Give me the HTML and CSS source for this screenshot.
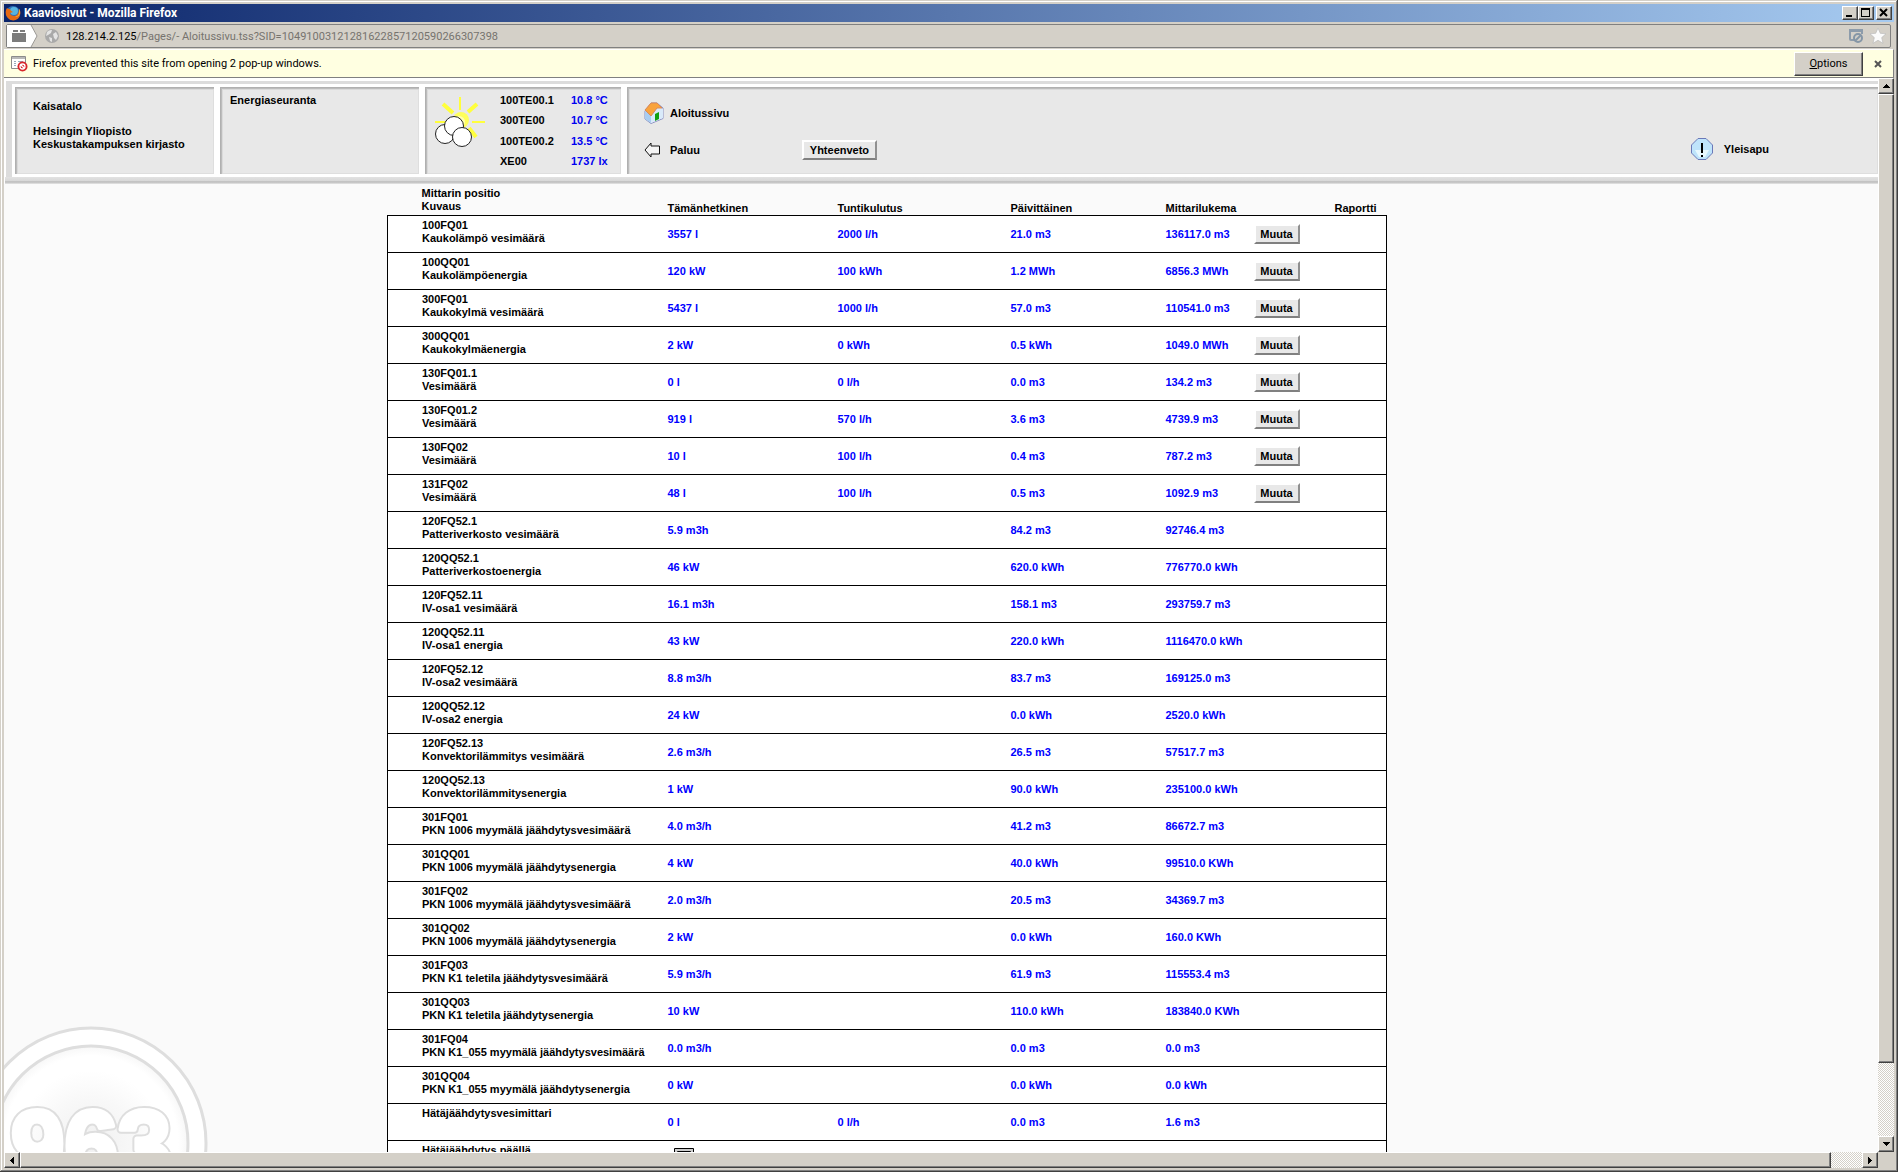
FILE: index.html
```html
<!DOCTYPE html>
<html lang="fi">
<head>
<meta charset="utf-8">
<title>Kaaviosivut - Mozilla Firefox</title>
<link rel="stylesheet" href="styles.css">
</head>
<body>
<div class="window">
  <div class="titlebar">
    <svg class="fx" width="16" height="16" viewBox="0 0 16 16"><circle cx="8" cy="8" r="7" fill="#2f6fb5"/><circle cx="9" cy="6" r="4" fill="#58b4e0"/><path d="M2 3C0 6 0 11 4 14c4 3 10 1 11-4 1-3 0-5-1-6 0 3-1 6-4 7-3 0-5-1-5-3l3-1C6 6 5 5 5 4 4 4 3 4 2 3z" fill="#e66a14"/><path d="M14 4c1 4 0 7-4 8 3 0 5-2 5-5 0-1 0-2-1-3z" fill="#ffcb3a"/></svg>
    <h1 class="title">Kaaviosivut - Mozilla Firefox</h1>
    <div class="winbtns">
      <button class="wb" aria-label="Minimize"><svg width="12" height="10"><path d="M2 7h6v2H2z"/></svg></button>
      <button class="wb" aria-label="Maximize"><svg width="12" height="10"><path d="M1 0h9v9H1zM2 2v6h7V2z" fill-rule="evenodd"/></svg></button>
      <button class="wb close" aria-label="Close"><svg width="12" height="10"><path d="M2 1l7 7M9 1L2 8" stroke="#000" stroke-width="2"/></svg></button>
    </div>
  </div>

  <div class="toolbar">
    <div class="urlbar">
      <svg class="identity" width="31" height="22" viewBox="0 0 31 22"><path d="M0 0h24l6 11-6 11H0z" fill="#fff"/><path d="M24 0l6 11-6 11" fill="none" stroke="#9a9894"/><path d="M6 5h5v2H6zM13 5h5v2h-5zM5 8h14v9H5z" fill="#7c7c7c"/></svg>
      <svg class="globe" width="16" height="16" viewBox="0 0 16 16"><circle cx="8" cy="8" r="7" fill="#a9a9a9"/><path d="M3 4c2-2 4-2 5-2L7 5 4 7 2 8zM9 6l3-2 2 4-2 4-2-2zM5 9l3 1v4l-2-1z" fill="#e4e4e4"/></svg>
      <div class="address"><b>128.214.2.125</b>/Pages/- Aloitussivu.tss?SID=10491003121281622857120590266307398</div>
      <svg width="16" height="16" viewBox="0 0 16 16"><path d="M14 3v3M2 2v9q0 1 1 1h3" fill="none" stroke="#8d9cab" stroke-width="2"/><path d="M1 1h14v3H1z" fill="#8d9cab"/><circle cx="10" cy="10" r="4" fill="#d4d0c8" stroke="#8596a6" stroke-width="2"/><path d="M7 13l6-6" stroke="#8596a6" stroke-width="2"/></svg>
      <svg class="star" width="16" height="16" viewBox="0 0 16 16"><path d="M8 0l2.300 5.300 5.700.5-4.300 3.800L13 15.300l-5-3-5 3 1.300-5.700L0 5.800l5.700-.5z" fill="#fbfbfb" stroke="#bbb" stroke-width=".7"/></svg>
    </div>
  </div>

  <div class="notice">
    <svg width="17" height="17" viewBox="0 0 17 17"><path d="M.5 1.500h14v12H.5z" fill="#fff" stroke="#8b8b8b"/><path d="M1 2h13v2H1z" fill="#b8b8b8"/><path d="M3 6h2v1H3zM3 8h2v1H3zM3 10h2v1H3zM7 6h5v1H7z" fill="#9ab"/><circle cx="11.500" cy="11.500" r="5" fill="#d8262b"/><circle cx="11.500" cy="11.500" r="2.500" fill="none" stroke="#fff" stroke-width="1.300"/><path d="M9.700 9.700l3.600 3.600" stroke="#fff" stroke-width="1.300"/></svg>
    <span class="msg">Firefox prevented this site from opening 2 pop-up windows.</span>
    <button class="options"><u>O</u>ptions</button>
    <button class="dismiss" aria-label="Close notification"><svg width="8" height="8"><path d="M1 1l6 6M7 1L1 7" stroke="#555" stroke-width="2"/></svg></button>
  </div>

  <div class="view">
    <div class="page">
      <svg class="mark" width="220" height="130" viewBox="0 0 220 130">
        <defs><radialGradient id="g"><stop offset="0" stop-color="#f0f0f0"/><stop offset=".45" stop-color="#f8f8f8"/><stop offset=".75" stop-color="#fff"/><stop offset=".9" stop-color="#fff"/><stop offset="1" stop-color="#f7f7f7"/></radialGradient></defs>
        <circle cx="87" cy="121" r="115" fill="#fff" stroke="#dedede" stroke-width="3"/>
        <circle cx="87" cy="121" r="97" fill="url(#g)" stroke="#dedede" stroke-width="3"/>
        <text class="num outline" x="7" y="156">963</text>
        <text class="num" x="7" y="156">963</text>
      </svg>

      <header class="head">
        <div class="panels">
          <section class="panel site"><p>Kaisatalo</p><p>Helsingin Yliopisto<br>Keskustakampuksen kirjasto</p></section>
          <section class="panel subject">Energiaseuranta</section>
          <section class="panel weather">
            <svg width="52" height="52" viewBox="0 0 52 52"><g stroke="#ffff3c" stroke-width="2"><path d="M26 1v13M1 26h11M38 26h13"/><path d="M9 8l10 9M43 8l-9 8M35 32l7 9" stroke-width="4"/></g><circle cx="27" cy="24" r="8" fill="#ffff5a"/><circle cx="25" cy="26" r="6" fill="#ffffb0"/><g fill="#fff" stroke="#222"><circle cx="11" cy="38" r="9.500"/><circle cx="20" cy="30" r="9.500"/><circle cx="28" cy="41" r="9.500"/></g></svg>
            <dl><dt>100TE00.1</dt><dd>10.8 °C</dd><dt>300TE00</dt><dd>10.7 °C</dd><dt>100TE00.2</dt><dd>13.5 °C</dd><dt>XE00</dt><dd>1737 lx</dd></dl>
          </section>
          <nav class="panel nav">
            <div class="links">
              <a href="#"><svg width="20" height="22" viewBox="0 0 20 22"><path d="M1 9v8l6 4.500 12-5V6L13 1H7z" fill="#e9f3fc" stroke="#8a8fc0"/><path d="M7 21V13l6-7 6 1v9z" fill="#d9eafa"/><path d="M1 9l6 4v8l-6-4z" fill="#a9cdf0"/><path d="M1 8l6-7h6l5 5-5 0-6 8z" fill="#f9a33c" stroke="#d98a5a"/><path d="M11 12l4-2v7l-4 2z" fill="#12a012"/></svg>Aloitussivu</a>
              <div class="row"><a href="#"><svg width="20" height="18" viewBox="0 0 20 18"><path d="M1 9l6-7v3h8.500v8H7v3z" fill="#f4f4f4" stroke="#111"/></svg>Paluu</a><button class="btn">Yhteenveto</button></div>
            </div>
            <a class="help" href="#"><svg width="22" height="22" viewBox="0 0 22 22"><path d="M7 .5h8L21.500 7v8L15 21.500H7L.5 15V7z" fill="#bfe4fb" stroke="#6b78b8"/><path d="M4 12h14l-4 7H8z" fill="#e8f8ff"/><path d="M10 5h2v10h-2zM10 17h2v2h-2z"/></svg>Yleisapu</a>
          </nav>
        </div>
      </header>

      <table class="meters">
        <colgroup><col class="c1"><col class="c2"><col class="c3"><col class="c4"><col class="c5"><col class="c6"><col></colgroup>
        <thead><tr><th>Mittarin positio<br>Kuvaus</th><th>Tämänhetkinen</th><th>Tuntikulutus</th><th>Päivittäinen</th><th>Mittarilukema</th><td></td><th>Raportti</th></tr></thead>
        <tbody>
        <tr><th>100FQ01<br>Kaukolämpö vesimäärä</th><td>3557 l</td><td>2000 l/h</td><td>21.0 m3</td><td>136117.0 m3</td><td><button class="btn">Muuta</button></td><td></td></tr>
        <tr><th>100QQ01<br>Kaukolämpöenergia</th><td>120 kW</td><td>100 kWh</td><td>1.2 MWh</td><td>6856.3 MWh</td><td><button class="btn">Muuta</button></td><td></td></tr>
        <tr><th>300FQ01<br>Kaukokylmä vesimäärä</th><td>5437 l</td><td>1000 l/h</td><td>57.0 m3</td><td>110541.0 m3</td><td><button class="btn">Muuta</button></td><td></td></tr>
        <tr><th>300QQ01<br>Kaukokylmäenergia</th><td>2 kW</td><td>0 kWh</td><td>0.5 kWh</td><td>1049.0 MWh</td><td><button class="btn">Muuta</button></td><td></td></tr>
        <tr><th>130FQ01.1<br>Vesimäärä</th><td>0 l</td><td>0 l/h</td><td>0.0 m3</td><td>134.2 m3</td><td><button class="btn">Muuta</button></td><td></td></tr>
        <tr><th>130FQ01.2<br>Vesimäärä</th><td>919 l</td><td>570 l/h</td><td>3.6 m3</td><td>4739.9 m3</td><td><button class="btn">Muuta</button></td><td></td></tr>
        <tr><th>130FQ02<br>Vesimäärä</th><td>10 l</td><td>100 l/h</td><td>0.4 m3</td><td>787.2 m3</td><td><button class="btn">Muuta</button></td><td></td></tr>
        <tr><th>131FQ02<br>Vesimäärä</th><td>48 l</td><td>100 l/h</td><td>0.5 m3</td><td>1092.9 m3</td><td><button class="btn">Muuta</button></td><td></td></tr>
        <tr><th>120FQ52.1<br>Patteriverkosto vesimäärä</th><td>5.9 m3h</td><td></td><td>84.2 m3</td><td>92746.4 m3</td><td></td><td></td></tr>
        <tr><th>120QQ52.1<br>Patteriverkostoenergia</th><td>46 kW</td><td></td><td>620.0 kWh</td><td>776770.0 kWh</td><td></td><td></td></tr>
        <tr><th>120FQ52.11<br>IV-osa1 vesimäärä</th><td>16.1 m3h</td><td></td><td>158.1 m3</td><td>293759.7 m3</td><td></td><td></td></tr>
        <tr><th>120QQ52.11<br>IV-osa1 energia</th><td>43 kW</td><td></td><td>220.0 kWh</td><td>1116470.0 kWh</td><td></td><td></td></tr>
        <tr><th>120FQ52.12<br>IV-osa2 vesimäärä</th><td>8.8 m3/h</td><td></td><td>83.7 m3</td><td>169125.0 m3</td><td></td><td></td></tr>
        <tr><th>120QQ52.12<br>IV-osa2 energia</th><td>24 kW</td><td></td><td>0.0 kWh</td><td>2520.0 kWh</td><td></td><td></td></tr>
        <tr><th>120FQ52.13<br>Konvektorilämmitys vesimäärä</th><td>2.6 m3/h</td><td></td><td>26.5 m3</td><td>57517.7 m3</td><td></td><td></td></tr>
        <tr><th>120QQ52.13<br>Konvektorilämmitysenergia</th><td>1 kW</td><td></td><td>90.0 kWh</td><td>235100.0 kWh</td><td></td><td></td></tr>
        <tr><th>301FQ01<br>PKN 1006 myymälä jäähdytysvesimäärä</th><td>4.0 m3/h</td><td></td><td>41.2 m3</td><td>86672.7 m3</td><td></td><td></td></tr>
        <tr><th>301QQ01<br>PKN 1006 myymälä jäähdytysenergia</th><td>4 kW</td><td></td><td>40.0 kWh</td><td>99510.0 KWh</td><td></td><td></td></tr>
        <tr><th>301FQ02<br>PKN 1006 myymälä jäähdytysvesimäärä</th><td>2.0 m3/h</td><td></td><td>20.5 m3</td><td>34369.7 m3</td><td></td><td></td></tr>
        <tr><th>301QQ02<br>PKN 1006 myymälä jäähdytysenergia</th><td>2 kW</td><td></td><td>0.0 kWh</td><td>160.0 KWh</td><td></td><td></td></tr>
        <tr><th>301FQ03<br>PKN K1 teletila jäähdytysvesimäärä</th><td>5.9 m3/h</td><td></td><td>61.9 m3</td><td>115553.4 m3</td><td></td><td></td></tr>
        <tr><th>301QQ03<br>PKN K1 teletila jäähdytysenergia</th><td>10 kW</td><td></td><td>110.0 kWh</td><td>183840.0 KWh</td><td></td><td></td></tr>
        <tr><th>301FQ04<br>PKN K1_055 myymälä jäähdytysvesimäärä</th><td>0.0 m3/h</td><td></td><td>0.0 m3</td><td>0.0 m3</td><td></td><td></td></tr>
        <tr><th>301QQ04<br>PKN K1_055 myymälä jäähdytysenergia</th><td>0 kW</td><td></td><td>0.0 kWh</td><td>0.0 kWh</td><td></td><td></td></tr>
        <tr><th>Hätäjäähdytysvesimittari</th><td>0 l</td><td>0 l/h</td><td>0.0 m3</td><td>1.6 m3</td><td></td><td></td></tr>
        <tr><th>Hätäjäähdytys päällä</th><td><svg class="lamp" width="20" height="22" viewBox="0 0 20 22"><path d="M.5 .5h19v21H.5z" fill="#ccc" stroke="#000"/><path d="M3.500 3.500h13v15h-13z" fill="#e8e8e8" stroke="#000"/></svg></td><td></td><td></td><td></td><td></td><td></td></tr>
        </tbody>
      </table>
    </div>

    <div class="sb v">
      <button class="arrow" aria-label="Up"><svg width="7" height="4"><path d="M3 0h1v1h1v1h1v1h1v1H0V3h1V2h1V1h1z"/></svg></button>
      <div class="track"><div class="thumb"></div></div>
      <button class="arrow" aria-label="Down"><svg width="7" height="4"><path d="M3 4h1V3h1V2h1V1h1V0H0v1h1v1h1v1h1z"/></svg></button>
    </div>
    <div class="sb h">
      <button class="arrow" aria-label="Left"><svg width="4" height="7"><path d="M0 3h1V2h1V1h1V0h1v7H3V6H2V5H1V4H0z"/></svg></button>
      <div class="track"><div class="thumb"></div></div>
      <button class="arrow" aria-label="Right"><svg width="4" height="7"><path d="M4 3H3V2H2V1H1V0H0v7h1V6h1V5h1V4h1z"/></svg></button>
    </div>
  </div>
</div>
</body>
</html>
```
FILE: styles.css
```css
* { box-sizing: border-box; }
html, body { margin: 0; height: 100%; }
body {
  overflow: hidden;
  font: 11px/13px "Roboto", "DejaVu Sans Condensed", sans-serif;
  color: #000;
}
button { font: inherit; color: #000; padding: 0; margin: 0; border-radius: 0; }
svg { display: block; flex: none; }
p, h1, dl, dd { margin: 0; }

/* window frame */
.window {
  height: 100vh;
  display: flex;
  flex-direction: column;
  padding: 4px;
  background: #d4d0c8;
  box-shadow: inset -1px -1px #404040, inset 1px 1px #d4d0c8, inset -2px -2px #808080, inset 2px 2px #fff;
}
.titlebar {
  flex: none;
  height: 18px;
  display: flex;
  align-items: center;
  gap: 3px;
  padding: 0 2px 0 1px;
  background: linear-gradient(90deg, #0a246a, #a6caf0);
}
.title { flex: 1; font-size: 12px; line-height: 16px; font-weight: bold; color: #fff; }
.winbtns { display: flex; }
.wb, .options, .arrow, .thumb {
  background: #d4d0c8;
  border: 1px solid;
  border-color: #fff #404040 #404040 #fff;
  box-shadow: inset -1px -1px #808080;
}
.wb { width: 16px; height: 14px; padding: 1px; }
.wb.close { margin-left: 2px; }

.toolbar { flex: none; height: 27px; padding: 2px 3px 1px 2px; }
.urlbar {
  height: 24px;
  display: flex;
  align-items: center;
  gap: 6px;
  padding-right: 4px;
  border: 1px solid #808080;
  border-radius: 2px;
}
.address { flex: 1; padding-top: 1px; color: #76736e; }
.address b { font-weight: normal; color: #000; }

.notice {
  flex: none;
  height: 29px;
  display: flex;
  align-items: center;
  gap: 5px;
  padding-left: 7px;
  background: #ffffe1;
  border-top: 1px solid #fff;
  border-right: 1px solid #808080;
  border-bottom: 1px solid #808080;
}
.msg { flex: 1; }
.options { width: 69px; height: 24px; }
.dismiss { border: 0; background: none; margin: 0 11px 0 6px; }

.view {
  flex: 1;
  min-height: 0;
  display: grid;
  grid-template: minmax(0, 1fr) 16px / minmax(0, 1fr) 16px;
}
.page {
  position: relative;
  overflow: hidden;
  background: #fafafa;
  font: bold 11px/13px "Liberation Sans", Arial, sans-serif;
}
.mark { position: absolute; left: 0; bottom: 0; }
.num { font: bold 96px "Liberation Sans", Arial, sans-serif; fill: #fff; stroke: #fff; stroke-width: 5px; stroke-linejoin: round; }
.num.outline { stroke: #dedede; stroke-width: 9px; }

/* page header */
.head { position: relative; padding: 3px 0 0 2px; background: #fff; }
.panels {
  display: flex;
  gap: 6px;
  padding: 3px 0 3px 3px;
  border: solid #dcdcdc;
  border-width: 3px 0 0 6px;
  background: #fff;
}
.head::after { content: ""; display: block; height: 7px; margin-left: -1px; background: linear-gradient(#e2e2e2, #d8d8d8 55%, #c2c2c2 60%, #c8c8c8 85%, #eee); }
.panel {
  height: 87px;
  padding: 7px 10px;
  background: #e8e8e8;
  box-shadow: inset 1px 1px #b0b0b0, inset 2px 2px #bcbcbc, inset 3px 3px #dadada, inset -1px -1px #dedede;
}
.panel a { display: flex; align-items: center; color: inherit; text-decoration: none; }
.site { width: 199px; padding: 13px 18px; display: grid; gap: 12px; align-content: start; }
.subject { width: 199px; }
.weather { width: 196px; display: flex; gap: 14px; padding: 3px 9px; }
.weather svg { margin-top: 6px; }
.weather dl { display: grid; grid-template-columns: 71px auto; line-height: 20px; white-space: nowrap; }
dd { color: #0000f0; }
.nav { flex: 1; display: flex; justify-content: space-between; padding: 15px 109px 0 17px; }
.links { display: grid; align-content: start; gap: 16px; }
.links a { gap: 6px; }
.row { display: flex; align-items: center; }
.row .btn { width: 75px; margin-left: 102px; }
.help { gap: 11px; margin-top: 25px; height: 44px; }

.btn {
  display: block;
  width: 46px;
  height: 20px;
  background: #e8e8e8;
  border: 2px solid;
  border-color: #fff #909090 #808080 #fff;
}

/* meter table */
.meters {
  position: relative;
  width: 1000px;
  margin-left: 383px;
  table-layout: fixed;
  border-collapse: collapse;
  white-space: nowrap;
}
.meters th, .meters td { padding: 0; text-align: left; font-weight: bold; }
.meters th:first-child { padding-left: 34px; }
.c1 { width: 280px; }
.c2 { width: 170px; }
.c3 { width: 173px; }
.c4 { width: 155px; }
.c5 { width: 88px; }
.c6 { width: 81px; }
thead tr { height: 31px; }
thead th { vertical-align: bottom; }
.meters thead th:first-child { padding-bottom: 2px; }
tbody { background: #fff; }
tbody tr { height: 37px; border: 1px solid #000; }
tbody td { color: #0000ff; vertical-align: middle; }
tbody th { vertical-align: top; }
.meters tbody th { padding-top: 3px; }
.meters tbody td { padding-top: 1px; }
.lamp { margin-left: 6px; }

/* scroll bars */
.sb { display: flex; }
.v { flex-direction: column; }
.arrow { flex: none; width: 16px; height: 16px; display: grid; place-items: center; }
.track { flex: 1; min-width: 0; min-height: 0; background: repeating-conic-gradient(#fff 0 25%, #d4d0c8 0 50%) 0 0 / 2px 2px; }
.v .thumb { height: 93%; }
.h .thumb { width: 98.3%; height: 100%; }
```
